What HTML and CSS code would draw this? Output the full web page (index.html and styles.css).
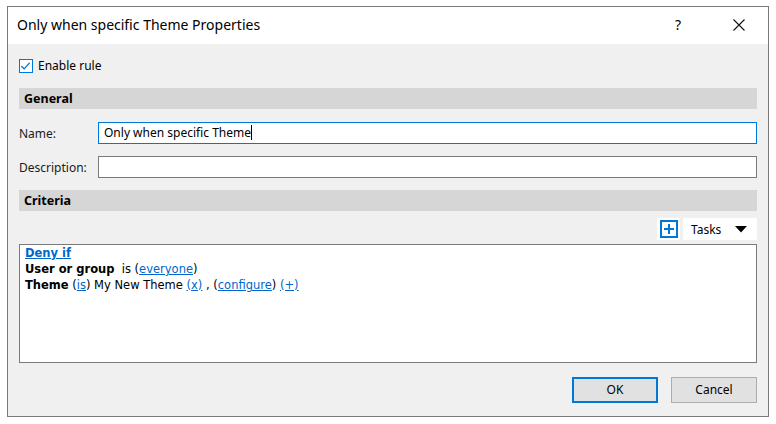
FILE: index.html
```html
<!DOCTYPE html>
<html>
<head>
<meta charset="utf-8">
<link rel="stylesheet" href="styles.css">
</head>
<body>
<div class="window">
  <div class="titlebar">
    <div class="title">Only when specific Theme Properties</div>
    <div class="help">?</div>
    <div class="close">
      <svg width="12" height="12" viewBox="0 0 12 12"><path d="M0.5 0.5 L11.5 11.5 M11.5 0.5 L0.5 11.5" stroke="#111" stroke-width="1.1" fill="none"/></svg>
    </div>
  </div>
  <div class="content">
    <div class="enable">
      <span class="checkbox">
        <svg width="14" height="14" viewBox="0 0 14 14"><path d="M2.5 7 L5.5 10 L11.5 3.5" stroke="#0078d7" stroke-width="1.3" fill="none"/></svg>
      </span>
      <span class="enable-label">Enable rule</span>
    </div>
    <div class="section">General</div>
    <div class="field">
      <label class="label">Name:</label>
      <div class="input focused">Only when specific Theme<span class="caret"></span></div>
    </div>
    <div class="field">
      <label class="label">Description:</label>
      <div class="input"></div>
    </div>
    <div class="section">Criteria</div>
    <div class="toolbar">
      <div class="addbtn">
        <svg width="18" height="18" viewBox="0 0 18 18"><rect x="1" y="1" width="16" height="16" fill="#fff" stroke="#0078d7" stroke-width="2"/><path d="M9 4 V14 M4 9 H14" stroke="#0078d7" stroke-width="2"/></svg>
      </div>
      <div class="tasks">
        <span>Tasks</span>
        <svg width="12" height="7" viewBox="0 0 12 7"><path d="M0 0 H12 L6 6.5 Z" fill="#000"/></svg>
      </div>
    </div>
    <div class="criteria">
      <div class="line"><a class="link bold">Deny if</a></div>
      <div class="line"><b>User or group</b>&nbsp; is (<a class="link">everyone</a>)</div>
      <div class="line"><b>Theme</b> (<a class="link">is</a>) My New Theme <a class="link">(x)</a> , (<a class="link">configure</a>) <a class="link">(+)</a></div>
    </div>
    <div class="buttons">
      <div class="btn default">OK</div>
      <div class="btn">Cancel</div>
    </div>
  </div>
</div>
</body>
</html>
```

FILE: styles.css
```css
html, body {
  margin: 0;
  padding: 0;
  background: #ffffff;
}
body {
  padding: 6px 0 0 7px;
  font-family: "Noto Sans", "Open Sans", sans-serif;
  font-size: 12px;
  color: #000;
}
.window {
  width: 760px;
  height: 409px;
  border: 1px solid #7a7a7a;
  display: flex;
  flex-direction: column;
  background: #f0f0f0;
}
.titlebar {
  height: 37px;
  background: #fff;
  display: flex;
  align-items: center;
  flex-shrink: 0;
}
.title {
  flex: 1;
  padding-left: 9px;
  font-size: 14px;
  color: #000;
  padding-bottom: 2px;
}
.help {
  width: 14px;
  font-size: 14px;
  margin-right: 44px;
  padding-bottom: 3px;
}
.close {
  width: 12px;
  margin-right: 23px;
  display: flex;
  padding-bottom: 2px;
}
.content {
  flex: 1;
  padding: 0 11px;
  display: flex;
  flex-direction: column;
}
.enable {
  display: flex;
  align-items: center;
  margin-top: 15px;
  height: 14px;
}
.checkbox {
  width: 12px;
  height: 12px;
  border: 1px solid #0078d7;
  background: #fff;
  display: flex;
}
.checkbox svg {
  margin: -1px 0 0 -1px;
}
.enable-label {
  margin-left: 5px;
  padding-bottom: 1px;
}
.section {
  margin-top: 15px;
  height: 21px;
  line-height: 21px;
  background: #d6d6d6;
  font-weight: bold;
  padding-left: 5px;
  font-size: 12.5px;
}
.field {
  display: flex;
  align-items: center;
  margin-top: 13px;
}
.field + .field {
  margin-top: 12px;
}
.label {
  width: 79px;
  color: #1a1a1a;
}
.input {
  flex: 1;
  height: 20px;
  line-height: 20px;
  border: 1px solid #7a7a7a;
  background: #fff;
  padding-left: 5px;
}
.input.focused {
  border-color: #0078d7;
}
.caret {
  display: inline-block;
  width: 1px;
  height: 15px;
  background: #000;
  vertical-align: -3px;
}
.field + .section {
  margin-top: 12px;
}
.toolbar {
  display: flex;
  justify-content: flex-end;
  margin-top: 7px;
  height: 22px;
  gap: 3px;
}
.addbtn {
  width: 23px;
  background: #fff;
  display: flex;
  align-items: center;
  justify-content: center;
}
.tasks {
  width: 74px;
  background: #fff;
  display: flex;
  align-items: center;
  padding-left: 8px;
  box-sizing: border-box;
  gap: 14px;
}
.criteria {
  margin-top: 4px;
  height: 115px;
  border: 1px solid #7a7a7a;
  background: #fff;
  padding: 0 5px 2px;
  font-family: "DejaVu Sans", sans-serif;
  font-size: 11.5px;
  line-height: 16px;
}
.link {
  color: #0066cc;
  text-decoration: underline;
}
.link.bold {
  font-weight: bold;
}
.buttons {
  display: flex;
  justify-content: flex-end;
  margin-top: 14px;
  gap: 13px;
}
.btn {
  width: 84px;
  height: 24px;
  line-height: 24px;
  text-align: center;
  background: #e1e1e1;
  border: 1px solid #adadad;
}
.btn.default {
  border: 2px solid #0078d7;
  width: 82px;
  height: 22px;
  line-height: 22px;
}
```
